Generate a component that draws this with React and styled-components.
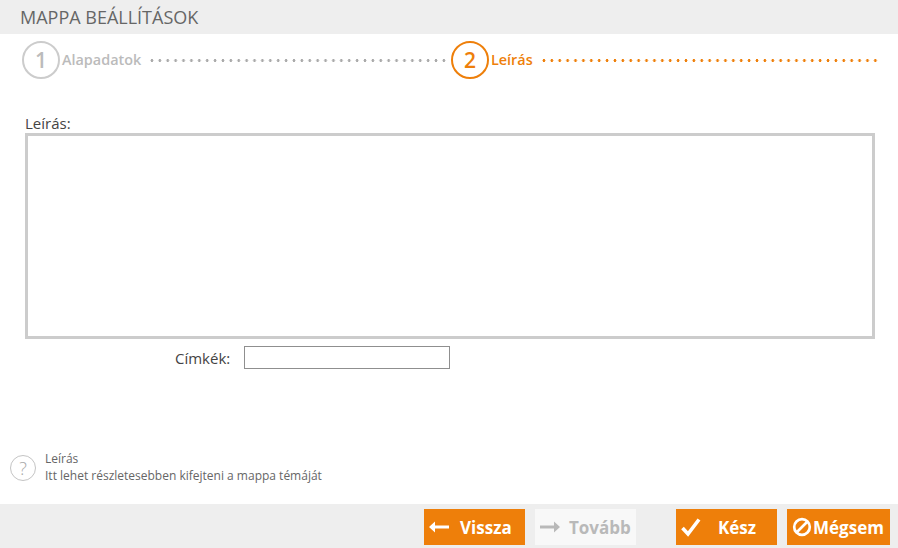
import styled, { createGlobalStyle } from 'styled-components';

const orange = '#ee7f0a';

const GlobalStyle = createGlobalStyle`
  html, body { margin:0; padding:0; background:#fff; }
  body { font-family:"Open Sans", "Liberation Sans", sans-serif; }
`
const Page = styled.div`
  width:898px;
  height:548px;
  display:flex;
  flex-direction:column;
  overflow:hidden;
`
const Header = styled.div`
  height:34px;
  flex:none;
  background:#eee;
  padding-left:20px;
  font-size:18px;
  line-height:34px;
  color:#666;
`
const Stepper = styled.div`
  display:flex;
  align-items:center;
  height:38px;
  margin-top:7px;
  padding:0 18px 0 22px;
`
const Step = styled.div`
  display:flex;
  align-items:center;
  flex:${p => p.$grow};
  color:${p => p.$active ? orange : '#bbb'};
`
const Circle = styled.div`
  width:38px;
  height:38px;
  flex:none;
  box-sizing:border-box;
  border:2px solid ${p => p.$active ? orange : '#ccc'};
  border-radius:50%;
  display:flex;
  align-items:center;
  justify-content:center;
  font-size:21px;
  font-weight:600;
`
const StepLabel = styled.div`
  margin-left:2px;
  font-size:14.4px;
  font-weight:600;
  line-height:40px;
`
const Dots = styled.div`
  flex:1;
  height:3px;
  margin:1px ${p => p.$right}px 0 ${p => p.$left}px;
  background:radial-gradient(circle at center, ${p => p.$active ? orange : '#aaa'} 1.2px, transparent 1.7px) left center / 7.9px 3px repeat-x;
`
const Content = styled.div`
  flex:1;
  padding:34px 23px 0 25px;
  display:flex;
  flex-direction:column;
`
const FieldLabel = styled.div`
  font-size:15px;
  line-height:20px;
  color:#444;
  height:20px;
`
const DescArea = styled.textarea`
  display:block;
  box-sizing:border-box;
  width:850px;
  height:206px;
  border:3px solid #ccc;
  background:#fff;
  outline:none;
  resize:none;
  margin:0;
`
const TagsRow = styled.div`
  display:flex;
  align-items:center;
  margin-top:7px;
  padding-left:150px;
`
const TagsLabel = styled.label`
  font-size:15px;
  color:#444;
  width:69px;
`
const TagsInput = styled.input`
  box-sizing:border-box;
  width:206px;
  height:23px;
  border:1px solid #8f8f8f;
  outline:none;
  margin:0;
  padding:0;
`
const Help = styled.div`
  display:flex;
  align-items:center;
  gap:9px;
  height:34px;
  padding-left:10px;
  margin-bottom:19px;
  color:#666;
  font-size:12px;
  line-height:17px;
`
const HelpIcon = styled.div`
  width:26px;
  height:26px;
  flex:none;
  box-sizing:border-box;
  border:1px solid #c4c4c4;
  border-radius:50%;
  color:#a8a8a8;
  font-size:18px;
  font-weight:300;
  line-height:24px;
  text-align:center;
`
const HelpText = styled.div`
  margin-top:-2px;
`
const Footer = styled.div`
  height:44px;
  flex:none;
  box-sizing:border-box;
  background:#eee;
  padding:5px 8px 3px 424px;
  display:flex;
`
const Button = styled.div`
  width:${p => p.$width || 101}px;
  height:36px;
  margin-left:${p => p.$gap || 0}px;
  display:flex;
  align-items:center;
  padding-left:5px;
  box-sizing:border-box;
  background:${p => p.$disabled ? '#f8f8f8' : orange};
  color:${p => p.$disabled ? '#b9b9b9' : '#fff'};
  font-size:17px;
  font-weight:700;
`
const ButtonIcon = styled.svg`
  flex:none;
  display:block;
  margin-right:${p => p.$space}px;
`

const ArrowLeft = () => (
  <ButtonIcon $space={11} width="20" height="14" viewBox="0 0 20 14">
    <path d="M0 7 L6 1.5 V5.5 H20 V8.5 H6 V12.5 Z" fill="currentColor" />
  </ButtonIcon>
)
const ArrowRight = () => (
  <ButtonIcon $space={9} width="20" height="14" viewBox="0 0 20 14">
    <path d="M20 7 L14 1.5 V5.5 H0 V8.5 H14 V12.5 Z" fill="currentColor" />
  </ButtonIcon>
)
const Check = () => (
  <ButtonIcon $space={17} width="20" height="20" viewBox="0 0 20 20">
    <path d="M1.5 11 L7 17 L18 2.5" fill="none" stroke="currentColor" strokeWidth="3.6" />
  </ButtonIcon>
)
const Ban = () => (
  <ButtonIcon $space={1} width="20" height="20" viewBox="0 0 20 20">
    <circle cx="10" cy="10" r="7.8" fill="none" stroke="currentColor" strokeWidth="2.7" />
    <path d="M4.5 15.5 L15.5 4.5" stroke="currentColor" strokeWidth="2.7" />
  </ButtonIcon>
)

function App() {
  return (
    <Page>
      <GlobalStyle />
      <Header>MAPPA BEÁLLÍTÁSOK</Header>
      <Stepper>
        <Step $grow="0 0 429px">
          <Circle>1</Circle>
          <StepLabel>Alapadatok</StepLabel>
          <Dots $left={7} $right={2} />
        </Step>
        <Step $grow="1" $active>
          <Circle $active>2</Circle>
          <StepLabel>Leírás</StepLabel>
          <Dots $active $left={7} $right={0} />
        </Step>
      </Stepper>
      <Content>
        <FieldLabel>Leírás:</FieldLabel>
        <DescArea />
        <TagsRow>
          <TagsLabel>Címkék:</TagsLabel>
          <TagsInput />
        </TagsRow>
      </Content>
      <Help>
        <HelpIcon>?</HelpIcon>
        <HelpText>
          <div>Leírás</div>
          <div>Itt lehet részletesebben kifejteni a mappa témáját</div>
        </HelpText>
      </Help>
      <Footer>
        <Button><ArrowLeft />Vissza</Button>
        <Button $gap={10} $disabled><ArrowRight />Tovább</Button>
        <Button $gap={40}><Check />Kész</Button>
        <Button $gap={10} $width={103}><Ban />Mégsem</Button>
      </Footer>
    </Page>
  );
}

export default App;
